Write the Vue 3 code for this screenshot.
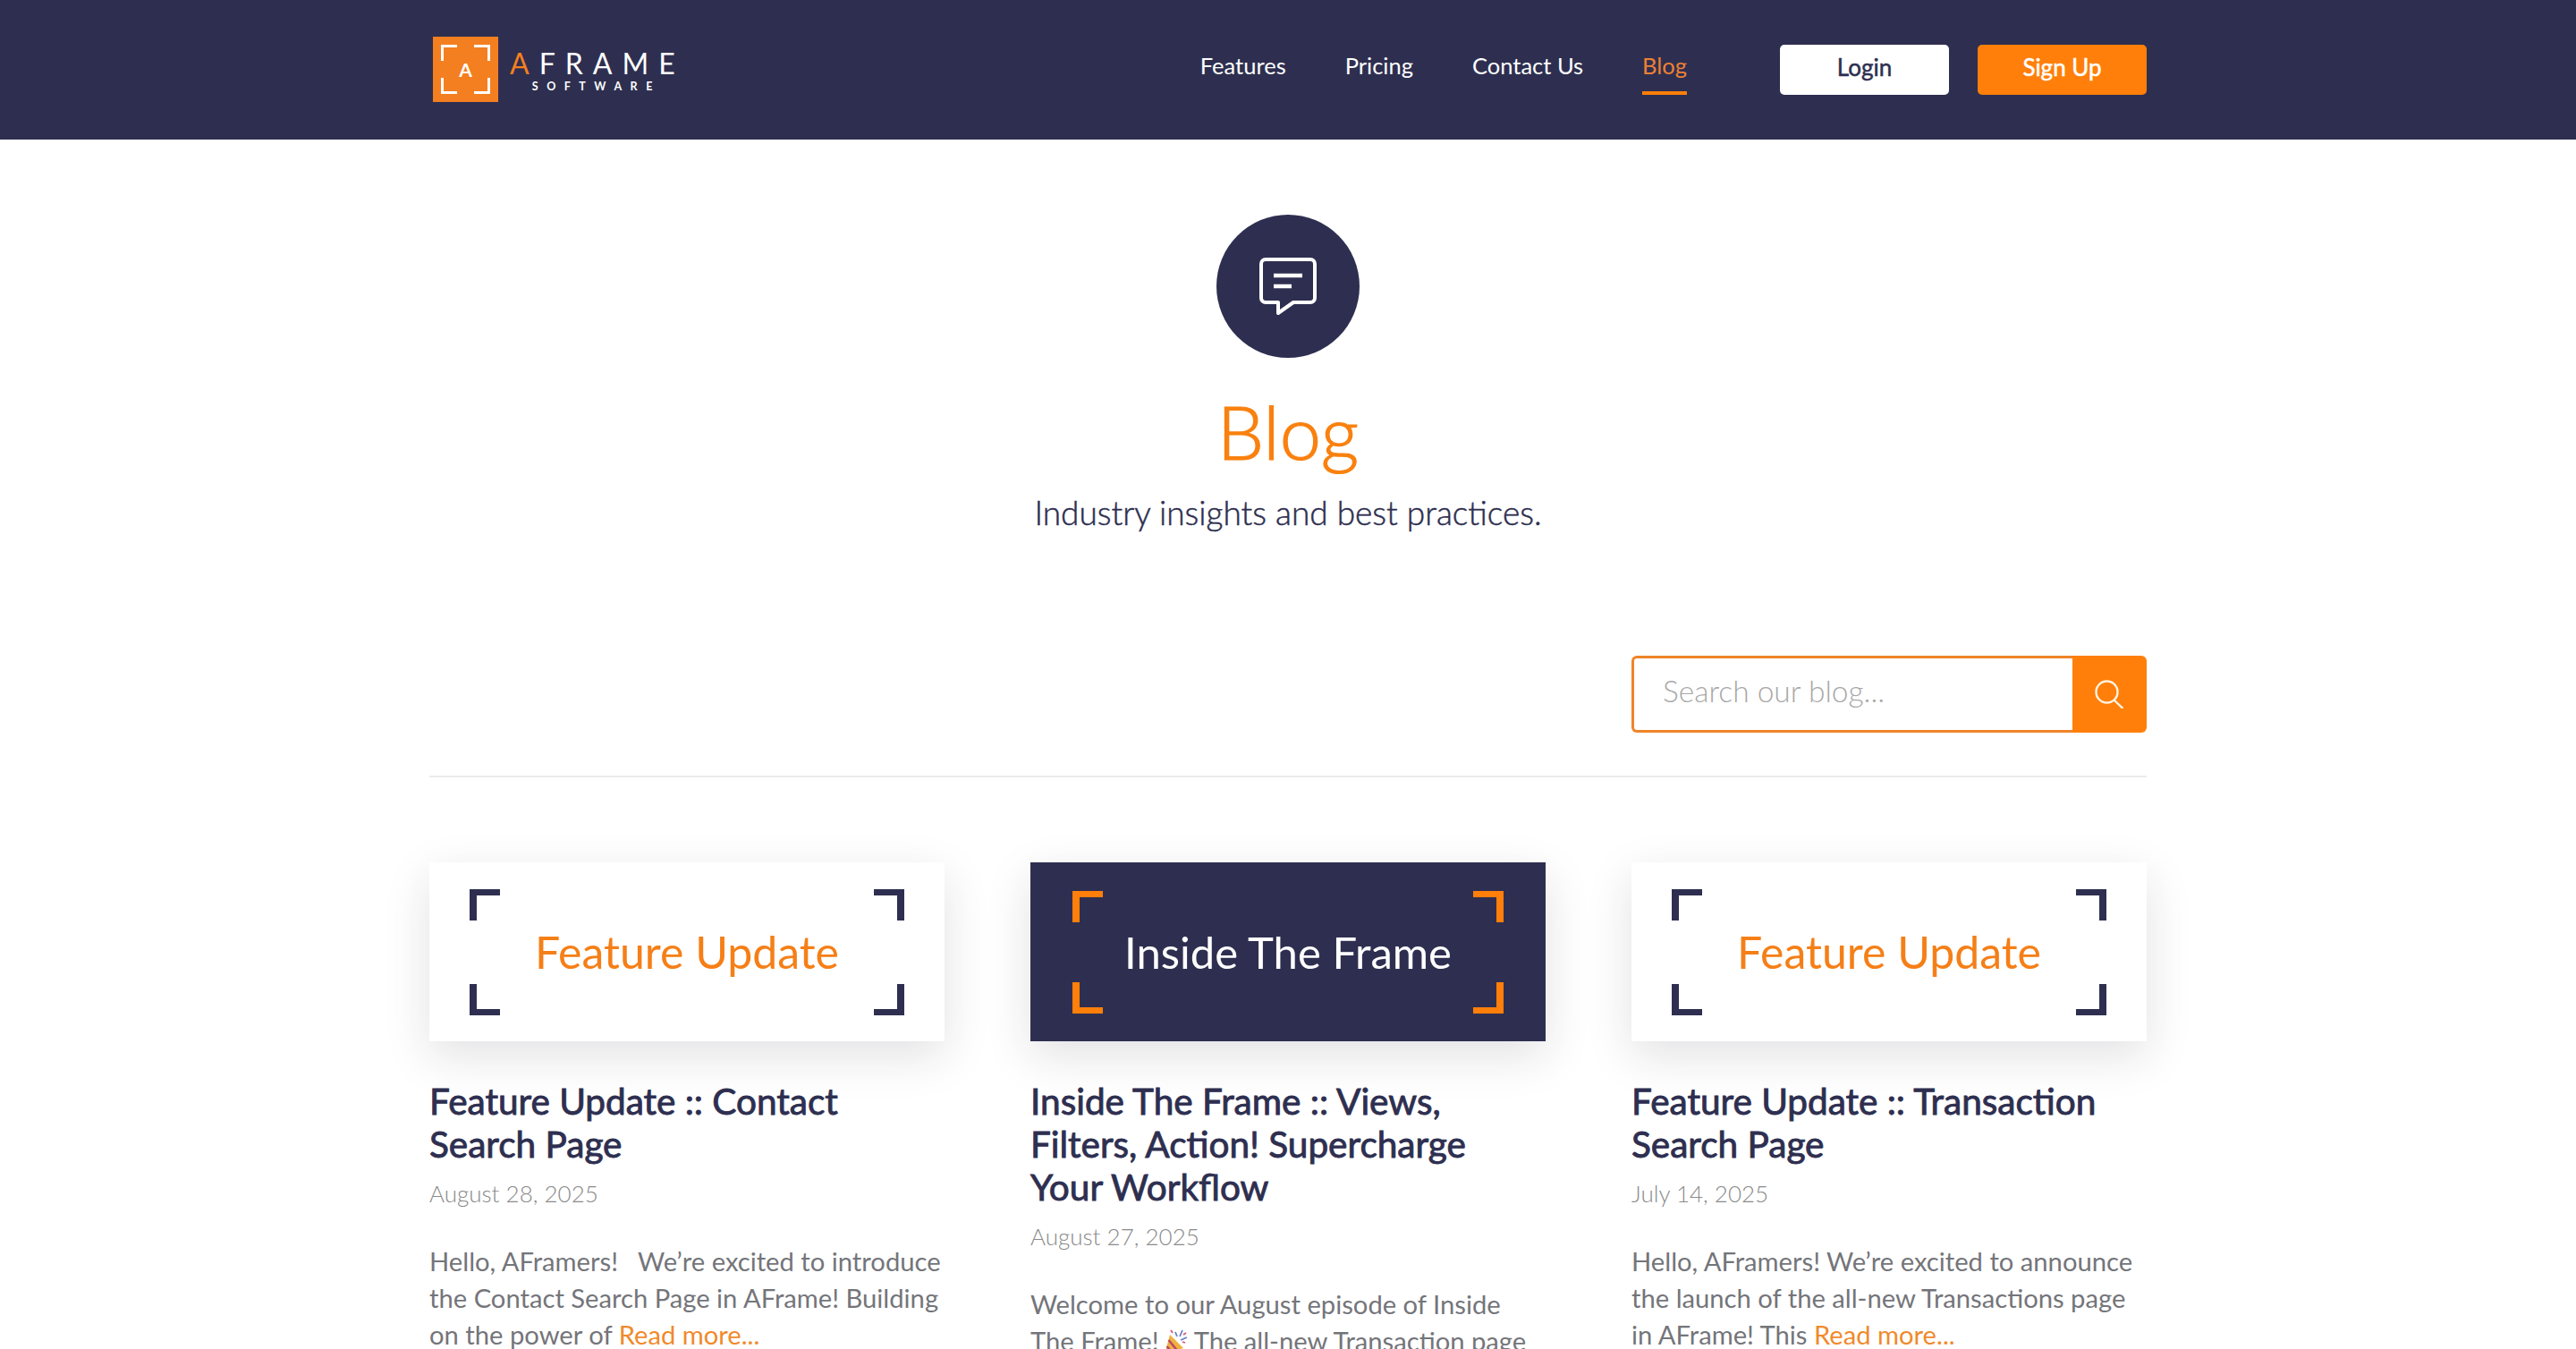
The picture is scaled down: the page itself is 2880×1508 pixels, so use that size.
<script setup>
// nav + post data for the blog landing page
const navLinks = [
  { label: 'Features' },
  { label: 'Pricing' },
  { label: 'Contact Us' },
  { label: 'Blog', active: true }
]

const posts = [
  {
    banner: 'Feature Update',
    dark: false,
    title: 'Feature Update :: Contact Search Page',
    date: 'August 28, 2025',
    before: 'Hello, AFramers!\u00a0\u00a0 We’re excited to introduce the Contact Search Page in AFrame! Building on the power of ',
    more: true
  },
  {
    banner: 'Inside The Frame',
    dark: true,
    title: 'Inside The Frame :: Views, Filters, Action! Supercharge Your Workflow',
    date: 'August 27, 2025',
    before: 'Welcome to our August episode of Inside The Frame! ',
    emoji: true,
    after: ' The all-new Transaction page',
    more: false
  },
  {
    banner: 'Feature Update',
    dark: false,
    title: 'Feature Update :: Transaction Search Page',
    date: 'July 14, 2025',
    before: 'Hello, AFramers! We’re excited to announce the launch of the all-new Transactions page in AFrame! This ',
    more: true
  }
]

const corners = ['tl', 'tr', 'bl', 'br']
</script>

<template>
  <div class="page">
    <header class="site-header">
      <div class="wrap header-row">
        <a class="logo">
          <span class="logo-mark">
            <span v-for="c in corners" :key="c" class="logo-corner" :class="c"></span>
            <span class="logo-letter">A</span>
          </span>
          <span class="logo-text">
            <span class="logo-name"><span class="logo-a">A</span>FRAME</span>
            <span class="logo-sub">SOFTWARE</span>
          </span>
        </a>

        <nav class="nav">
          <a v-for="link in navLinks" :key="link.label" class="nav-link" :class="{ active: link.active }">{{ link.label }}</a>
        </nav>

        <div class="actions">
          <a class="btn btn-login">Login</a>
          <a class="btn btn-signup">Sign Up</a>
        </div>
      </div>
    </header>

    <section class="hero">
      <div class="hero-icon">
        <svg width="64" height="64" viewBox="0 0 64 64" fill="none" stroke="#fff" stroke-width="4">
          <path d="M7 2H57a5 5 0 0 1 5 5V45a5 5 0 0 1-5 5H38L21 62V50H7a5 5 0 0 1-5-5V7a5 5 0 0 1 5-5Z" stroke-linejoin="round" />
          <path d="M16 20H48M16 32H36" stroke-width="4.5" />
        </svg>
      </div>
      <h1 class="hero-title">Blog</h1>
      <p class="hero-sub">Industry insights and best practices.</p>
    </section>

    <div class="wrap">
      <div class="search-row">
        <form class="search" @submit.prevent>
          <input class="search-input" type="text" placeholder="Search our blog..." />
          <button class="search-btn" type="submit" aria-label="Search">
            <svg width="32" height="32" viewBox="0 0 32 32" fill="none" stroke="#fff4e4" stroke-width="2.4" stroke-linecap="round">
              <circle cx="13.5" cy="13.5" r="12" />
              <path d="M22 23L31 31.5" />
            </svg>
          </button>
        </form>
      </div>

      <div class="posts">
        <article v-for="post in posts" :key="post.title" class="post">
          <div class="banner" :class="{ dark: post.dark }">
            <span v-for="c in corners" :key="c" class="corner" :class="c"></span>
            <span class="banner-text">{{ post.banner }}</span>
          </div>
          <h2 class="post-title">{{ post.title }}</h2>
          <div class="post-date">{{ post.date }}</div>
          <p class="post-body">
            {{ post.before }}<svg v-if="post.emoji" class="emoji" width="28" height="28" viewBox="0 0 28 28">
              <path d="M2 28L8 6L23 21Z" fill="#efb23e" />
              <path d="M4.5 19L11 26M6.5 12L16 23.5" stroke="#b9486e" stroke-width="2.5" />
              <path d="M14 3L16 8M22 1L19 8M27 9L20 12" stroke="#6a7fc9" stroke-width="1.8" />
              <path d="M9 1L11 4M26 4L23 6M25 15L22 14" stroke="#d9547a" stroke-width="1.8" />
            </svg>{{ post.after }}<a v-if="post.more" class="read-more">Read more...</a>
          </p>
        </article>
      </div>
    </div>
  </div>
</template>

<style>
body {
  margin: 0;
  background: #fff;
}
</style>

<style scoped>
.page {
  height: 100vh;
  overflow: hidden;
  font-family: Lato, "Liberation Sans", sans-serif;
  color: #2e2f50;
}

.wrap {
  width: 1920px;
  margin: 0 auto;
}

.site-header {
  height: 156px;
  background: #2e2f50;
}

.header-row {
  display: flex;
  align-items: center;
  height: 100%;
}

.logo {
  display: flex;
  align-items: center;
  gap: 13px;
  margin: 0 0 2px 4px;
}

.logo-mark {
  position: relative;
  display: flex;
  align-items: center;
  justify-content: center;
  width: 73px;
  height: 73px;
  background: #f47f20;
}

.logo-letter {
  color: #fff;
  font-size: 21px;
  font-weight: 700;
}

.logo-corner {
  position: absolute;
  width: 15px;
  height: 15px;
  border: 0 solid #fff;
}

.logo-corner.tl { left: 9px; top: 9px; border-width: 3px 0 0 3px; }
.logo-corner.tr { right: 9px; top: 9px; border-width: 3px 3px 0 0; }
.logo-corner.bl { left: 9px; bottom: 9px; border-width: 0 0 3px 3px; }
.logo-corner.br { right: 9px; bottom: 9px; border-width: 0 3px 3px 0; }

.logo-text {
  display: flex;
  flex-direction: column;
  align-items: center;
  margin-top: 6px;
}

.logo-name {
  color: #fff;
  font-size: 32px;
  line-height: 32px;
  letter-spacing: 11px;
  margin-right: -11px;
}

.logo-a {
  color: #f47f20;
}

.logo-sub {
  color: #fff;
  font-size: 12.5px;
  line-height: 18px;
  font-weight: 700;
  letter-spacing: 9.5px;
  margin: 1px -9px 0 0;
}

.nav {
  display: flex;
  gap: 66px;
  margin-left: auto;
}

.nav-link {
  position: relative;
  color: #fff;
  font-size: 25.5px;
  line-height: 32px;
  padding: 7px 0 17px;
}

.nav-link.active {
  color: #ee8034;
}

.nav-link.active::after {
  content: "";
  position: absolute;
  left: 0;
  right: 0;
  bottom: 0;
  height: 4px;
  background: #ff7f0a;
}

.actions {
  display: flex;
  gap: 32px;
  margin-left: 104px;
}

.btn {
  display: flex;
  align-items: center;
  justify-content: center;
  box-sizing: border-box;
  width: 189px;
  height: 56px;
  border-radius: 5px;
  font-size: 26px;
  -webkit-text-stroke: 0.5px currentColor;
  padding-bottom: 6px;
}

.btn-login {
  background: #fff;
  color: #2e2f50;
}

.btn-signup {
  background: #ff7f0a;
  color: #fff;
}

.hero {
  display: flex;
  flex-direction: column;
  align-items: center;
  padding-top: 84px;
}

.hero-icon {
  display: flex;
  align-items: center;
  justify-content: center;
  width: 160px;
  height: 160px;
  border-radius: 50%;
  background: #2e2f50;
}

.hero-title {
  margin: 32px 0 0;
  color: #f9810f;
  font-size: 83px;
  line-height: 100px;
  font-weight: 300;
  -webkit-text-stroke: 1.2px currentColor;
}

.hero-sub {
  margin: 17px 0 0;
  font-size: 37px;
  line-height: 48px;
  font-weight: 300;
  -webkit-text-stroke: 0.5px currentColor;
}

.search-row {
  display: flex;
  justify-content: flex-end;
  margin-top: 136px;
  padding-bottom: 48px;
  border-bottom: 2px solid #ececec;
}

.search {
  display: flex;
  width: 576px;
  height: 86px;
}

.search-input {
  flex: 1;
  min-width: 0;
  box-sizing: border-box;
  padding: 0 32px 8px;
  border: 3px solid #f08428;
  border-right: 0;
  border-radius: 6px 0 0 6px;
  outline: none;
  font-family: inherit;
  font-size: 33.5px;
  font-weight: 300;
  color: #2e2f50;
}

.search-input::placeholder {
  color: #a8a8a8;
  opacity: 1;
}

.search-btn {
  display: flex;
  align-items: center;
  justify-content: center;
  width: 83px;
  padding: 0 2px 0 0;
  border: 0;
  border-radius: 0 6px 6px 0;
  background: #ff7f0a;
}

.posts {
  display: grid;
  grid-template-columns: repeat(3, 576px);
  gap: 96px;
  margin-top: 95px;
}

.banner {
  position: relative;
  display: flex;
  align-items: center;
  justify-content: center;
  height: 200px;
  background: #fff;
  color: #f57f17;
  box-shadow: 0 16px 48px rgba(30, 30, 50, 0.13);
}

.banner.dark {
  background: #2e2f50;
  color: #fff;
}

.banner-text {
  font-size: 50px;
  line-height: 60px;
}

.dark .banner-text {
  font-size: 49px;
}

.corner {
  position: absolute;
  width: 26px;
  height: 28px;
  border: 0 solid #2e2f50;
}

.corner.tl { left: 45px; top: 30px; border-width: 7px 0 0 8px; }
.corner.tr { right: 45px; top: 30px; border-width: 7px 8px 0 0; }
.corner.bl { left: 45px; bottom: 29px; border-width: 0 0 7px 8px; }
.corner.br { right: 45px; bottom: 29px; border-width: 0 8px 7px 0; }

.dark .corner {
  border-color: #ff7f0a;
}

.dark .corner.tl { left: 47px; top: 32px; }
.dark .corner.tr { right: 47px; top: 32px; }
.dark .corner.bl { left: 47px; bottom: 31px; }
.dark .corner.br { right: 47px; bottom: 31px; }

.post-title {
  margin: 43px 0 0;
  padding-right: 16px;
  font-size: 40.5px;
  line-height: 48px;
  font-weight: 400;
  -webkit-text-stroke: 0.9px currentColor;
}

.post-date {
  margin-top: 15px;
  color: #8a8a8a;
  font-size: 26px;
  line-height: 32px;
  font-weight: 300;
}

.post-body {
  margin: 39px 0 0;
  color: #74757a;
  font-size: 29.2px;
  line-height: 41px;
  font-weight: 400;
}

.emoji {
  vertical-align: -4px;
  margin-left: -3px;
}

.read-more {
  color: #f08a2c;
}
</style>
